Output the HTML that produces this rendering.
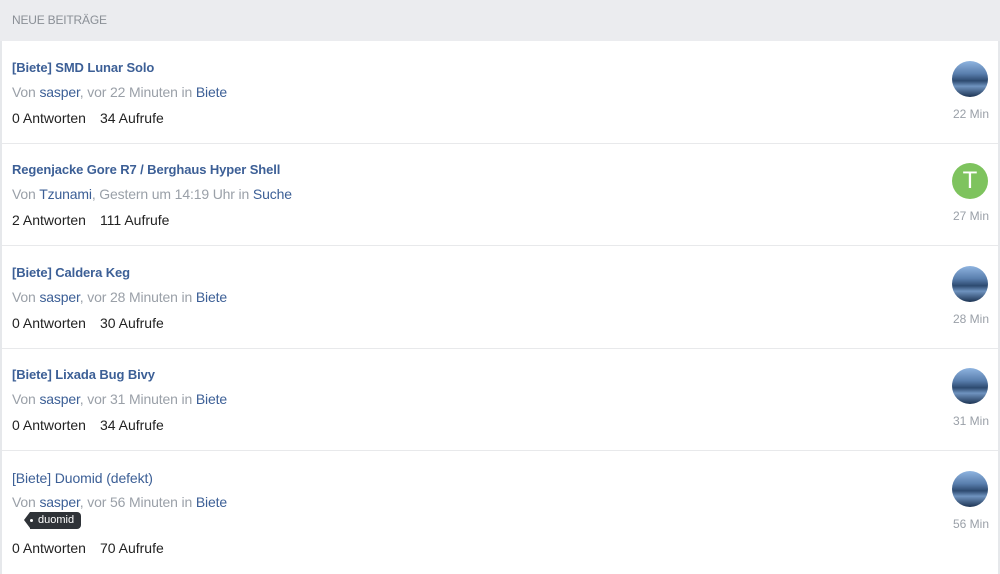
<!DOCTYPE html>
<html><head><meta charset="utf-8"><style>
body{margin:0;width:1000px;height:574px;background:#e6e8eb;font-family:"Liberation Sans",sans-serif;position:relative;overflow:hidden}
.hd{position:absolute;left:0;top:0;width:1000px;height:41px;background:#ebecef;color:#8a8f96;font-size:12px;line-height:41px;text-indent:12px;letter-spacing:-0.2px}
.box{position:absolute;left:2px;top:41px;width:996px;height:533px;background:#fff}
.row{position:absolute;left:0;width:996px;height:102px;border-bottom:1px solid #e8e9eb}
.t{position:absolute;left:10px;top:19px;font-size:13px;font-weight:bold;color:#3c5f96;letter-spacing:-0.1px}
.m{position:absolute;left:10px;top:43px;font-size:14px;color:#9aa0a8;letter-spacing:-0.15px}
.m b{font-weight:normal;color:#3c5f96}
.s{position:absolute;left:10px;top:69px;font-size:14px;color:#222}
.s span{margin-left:14px}
.av{position:absolute;left:950px;top:20px;width:36px;height:36px;border-radius:50%;overflow:hidden;background:linear-gradient(180deg,#8fb4e0 0%,#5a7fae 35%,#2d4a70 55%,#6f93bf 70%,#1d3453 100%)}
.av.g{background:#7ec35e;color:#fff;font-size:24px;text-align:center;line-height:36px}
.tm{position:absolute;left:940px;top:66px;font-size:12px;color:#9aa0a8;width:47px;text-align:right}
.tag{position:absolute;left:30px;top:512px;background:#2f3338;color:#fff;font-size:11px;line-height:17px;padding:0 7px 0 8px;border-radius:0 4px 4px 0}
.tag:before{content:"";position:absolute;left:-6px;top:0;border-right:6px solid #2f3338;border-top:8.5px solid transparent;border-bottom:8.5px solid transparent}
.tag:after{content:"";position:absolute;left:0px;top:7px;width:3px;height:3px;border-radius:50%;background:#fff}
</style></head><body>
<div class="hd">NEUE BEITRÄGE</div>
<div class="box">
<div class="row" style="top:0"><div class="t">[Biete] SMD Lunar Solo</div><div class="m">Von <b>sasper</b>, vor 22 Minuten in <b>Biete</b></div><div class="s">0 Antworten<span>34 Aufrufe</span></div><div class="av"></div><div class="tm">22 Min</div></div>
<div class="row" style="top:102px"><div class="t">Regenjacke Gore R7 / Berghaus Hyper Shell</div><div class="m">Von <b>Tzunami</b>, Gestern um 14:19 Uhr in <b>Suche</b></div><div class="s">2 Antworten<span>111 Aufrufe</span></div><div class="av g">T</div><div class="tm">27 Min</div></div>
<div class="row" style="top:205px"><div class="t">[Biete] Caldera Keg</div><div class="m">Von <b>sasper</b>, vor 28 Minuten in <b>Biete</b></div><div class="s">0 Antworten<span>30 Aufrufe</span></div><div class="av"></div><div class="tm">28 Min</div></div>
<div class="row" style="top:307px"><div class="t">[Biete] Lixada Bug Bivy</div><div class="m">Von <b>sasper</b>, vor 31 Minuten in <b>Biete</b></div><div class="s">0 Antworten<span>34 Aufrufe</span></div><div class="av"></div><div class="tm">31 Min</div></div>
<div class="row" style="top:410px;height:123px;border:0"><div class="t" style="font-weight:normal;font-size:14px">[Biete] Duomid (defekt)</div><div class="m">Von <b>sasper</b>, vor 56 Minuten in <b>Biete</b></div><div class="s" style="top:89px">0 Antworten<span>70 Aufrufe</span></div><div class="av"></div><div class="tm">56 Min</div></div>
</div>
<div class="tag">duomid</div>
</body></html>
